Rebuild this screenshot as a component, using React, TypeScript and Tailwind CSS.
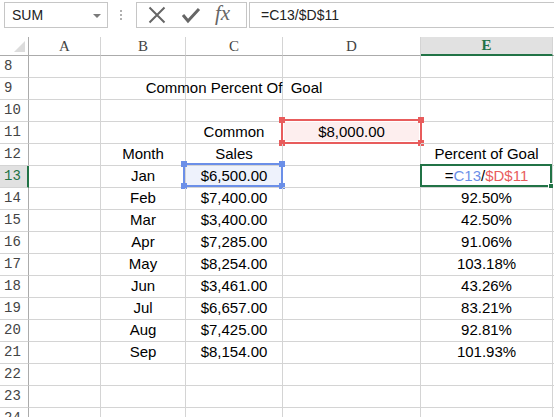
import { ReactNode } from 'react';

const COLS = ['A', 'B', 'C', 'D', 'E'];
const COL_W = ['w-[72px]', 'w-[85px]', 'w-[97px]', 'w-[138px]', 'w-[132px]'];

type Row = { n: number; b?: string; c?: string; d?: string; e?: string };

const ROWS: Row[] = [
    { n: 8 },
    { n: 9 },
    { n: 10 },
    { n: 11, c: 'Common', d: '$8,000.00' },
    { n: 12, b: 'Month', c: 'Sales', e: 'Percent of Goal' },
    { n: 13, b: 'Jan', c: '$6,500.00' },
    { n: 14, b: 'Feb', c: '$7,400.00', e: '92.50%' },
    { n: 15, b: 'Mar', c: '$3,400.00', e: '42.50%' },
    { n: 16, b: 'Apr', c: '$7,285.00', e: '91.06%' },
    { n: 17, b: 'May', c: '$8,254.00', e: '103.18%' },
    { n: 18, b: 'Jun', c: '$3,461.00', e: '43.26%' },
    { n: 19, b: 'Jul', c: '$6,657.00', e: '83.21%' },
    { n: 20, b: 'Aug', c: '$7,425.00', e: '92.81%' },
    { n: 21, b: 'Sep', c: '$8,154.00', e: '101.93%' },
    { n: 22 },
    { n: 23 },
    { n: 24 },
];

function Handle({ pos, color }: { pos: string; color: string }) {
    return <div className={`absolute w-[6px] h-[6px] ${color} ${pos}`} />;
}

function Cell({ w, children, className = '' }: { w: string; children?: ReactNode; className?: string }) {
    return (
        <div
            className={`${w} h-[22px] shrink-0 border-r border-b border-[#d4d4d4] flex items-center justify-center whitespace-pre relative ${className}`}
        >
            {children}
        </div>
    );
}

function FormulaBar() {
    return (
        <div className="h-[37px] flex items-start pt-[2px] text-[14px] text-[#222]">
            <div className="ml-[4px] w-[104px] h-[26px] border border-[#c6c6c6] flex items-center pl-[7px] relative">
                SUM
                <div className="absolute right-[6px] top-[11px] w-0 h-0 border-l-[4px] border-r-[4px] border-t-[4px] border-l-transparent border-r-transparent border-t-[#7a7a7a]" />
            </div>
            <div className="ml-[12px] mt-[8px] flex flex-col gap-[2px]">
                <div className="w-[2px] h-[2px] bg-[#b0b0b0]" />
                <div className="w-[2px] h-[2px] bg-[#b0b0b0]" />
                <div className="w-[2px] h-[2px] bg-[#b0b0b0]" />
            </div>
            <div className="ml-[14px] w-[111px] h-[26px] border border-[#c6c6c6] flex items-center">
                <svg width="18" height="18" viewBox="0 0 18 18" className="ml-[11px]">
                    <path d="M1.5 1.5 L16.5 16.5 M16.5 1.5 L1.5 16.5" stroke="#666" strokeWidth="2" />
                </svg>
                <svg width="20" height="18" viewBox="0 0 20 18" className="ml-[15px]">
                    <path d="M2 9 L7 15 L18 3" stroke="#666" strokeWidth="3" fill="none" />
                </svg>
                <span className="ml-[14px] font-['Liberation_Serif'] italic text-[21px] leading-none text-[#666] -mt-[3px]">
                    fx
                </span>
            </div>
            <div className="ml-[2px] flex-1 h-[26px] border border-r-0 border-[#c6c6c6] flex items-center pl-[11px]">
                =C13/$D$11
            </div>
        </div>
    );
}

function HeaderRow() {
    return (
        <div className="flex h-[19px] font-['Liberation_Serif'] text-[15px] text-[#444]">
            <div className="w-[29px] shrink-0 border-r border-b border-[#ababab] relative">
                <svg width="11" height="11" viewBox="0 0 11 11" className="absolute right-[3px] bottom-[3px]">
                    <path d="M11 0 L11 11 L0 11 Z" fill="#dcdcdc" />
                </svg>
            </div>
            {COLS.map((c, i) =>
                c === 'E' ? (
                    <div
                        key={c}
                        className={`${COL_W[i]} shrink-0 border-r border-[#d4d4d4] border-b-2 border-b-[#217346] bg-[#e1e1e1] text-[#217346] font-bold flex items-center justify-center`}
                    >
                        {c}
                    </div>
                ) : (
                    <div
                        key={c}
                        className={`${COL_W[i]} shrink-0 border-r border-[#d4d4d4] border-b border-b-[#ababab] flex items-center justify-center`}
                    >
                        {c}
                    </div>
                ),
            )}
            <div className="flex-1 border-b border-[#ababab]" />
        </div>
    );
}

function App() {
    return (
        <div className="w-[554px] h-[417px] overflow-hidden bg-white font-['Liberation_Sans'] text-[15px] text-black">
            <FormulaBar />
            <HeaderRow />
            {ROWS.map((r) => {
                const active = r.n === 13;
                return (
                    <div key={r.n} className="flex">
                        <div
                            className={`w-[29px] h-[22px] shrink-0 border-b border-[#d4d4d4] flex items-center pl-[4px] font-['Liberation_Mono'] text-[14px] ${
                                active
                                    ? 'bg-[#e1e1e1] text-[#217346] border-r-2 border-r-[#217346]'
                                    : 'text-[#444] border-r border-r-[#ababab]'
                            }`}
                        >
                            {r.n}
                        </div>
                        <Cell w={COL_W[0]} />
                        <Cell w={COL_W[1]}>{r.b}</Cell>
                        <Cell w={COL_W[2]} className={active ? 'bg-[#eef2fc]' : ''}>
                            {r.n === 9 ? 'Common Percent Of  Goal' : r.c}
                            {active && (
                                <div className="absolute -left-[3px] -top-[3px] -right-[1px] bottom-0 border-2 border-[#6b8fe8]">
                                    <Handle pos="-left-[4px] -top-[4px]" color="bg-[#6b8fe8]" />
                                    <Handle pos="-right-[4px] -top-[4px]" color="bg-[#6b8fe8]" />
                                    <Handle pos="-left-[4px] -bottom-[4px]" color="bg-[#6b8fe8]" />
                                    <Handle pos="-right-[4px] -bottom-[4px]" color="bg-[#6b8fe8]" />
                                </div>
                            )}
                        </Cell>
                        <Cell w={COL_W[3]} className={r.n === 11 ? 'bg-[#fdeeee]' : ''}>
                            {r.n === 11 && (
                                <div className="absolute -left-[2px] -top-[3px] -right-[2px] -bottom-[1px] border-2 border-[#e85c5c]">
                                    <div className="absolute inset-0 border border-white" />
                                    <Handle pos="-left-[4px] -top-[4px]" color="bg-[#e85c5c]" />
                                    <Handle pos="-right-[4px] -top-[4px]" color="bg-[#e85c5c]" />
                                    <Handle pos="-left-[4px] -bottom-[4px]" color="bg-[#e85c5c]" />
                                    <Handle pos="-right-[4px] -bottom-[4px]" color="bg-[#e85c5c]" />
                                </div>
                            )}
                            <span className="relative">{r.d}</span>
                        </Cell>
                        <Cell w={COL_W[4]}>
                            {active ? (
                                <>
                                    <span>
                                        =<span className="text-[#6b8fe8]">C13</span>/
                                        <span className="text-[#e85c5c]">$D$11</span>
                                    </span>
                                    <div className="absolute -left-[1px] -top-[2px] right-0 bottom-0 border-2 border-[#217346]">
                                        <div className="absolute -right-[4px] -bottom-[4px] w-[6px] h-[6px] bg-[#217346] border border-white" />
                                    </div>
                                </>
                            ) : (
                                r.e
                            )}
                        </Cell>
                        <div className="flex-1 h-[22px] border-b border-[#d4d4d4]" />
                    </div>
                );
            })}
        </div>
    );
}

export default App;
